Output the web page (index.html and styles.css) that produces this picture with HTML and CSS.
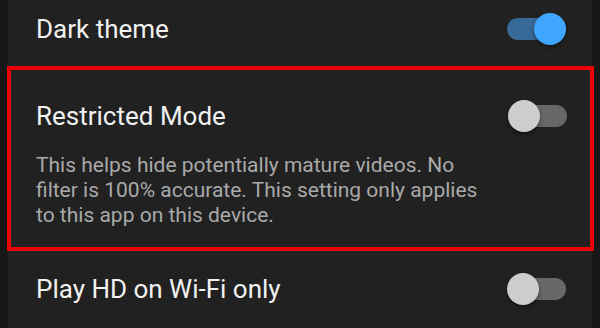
FILE: index.html
```html
<!DOCTYPE html>
<html lang="en">
<head>
<meta charset="utf-8">
<title>Settings</title>
<link rel="stylesheet" href="styles.css">
</head>
<body>
<main class="panel">
  <div class="row row-first">
    <span class="title">Dark theme</span>
    <span class="switch on" role="switch" aria-checked="true"><span class="knob"></span></span>
  </div>
  <section class="highlight">
    <div class="row-inner">
      <span class="title">Restricted Mode</span>
      <span class="switch" role="switch" aria-checked="false"><span class="knob"></span></span>
    </div>
    <p class="desc">This helps hide potentially mature videos. No<br>filter is 100% accurate. This setting only applies<br>to this app on this device.</p>
  </section>
  <div class="row row-last">
    <span class="title">Play HD on Wi-Fi only</span>
    <span class="switch" role="switch" aria-checked="false"><span class="knob"></span></span>
  </div>
</main>
</body>
</html>
```
FILE: styles.css
```css
html, body {
  margin: 0;
  padding: 0;
  height: 100%;
  overflow: hidden;
}
body {
  background: #171717;
  font-family: Roboto, "Noto Sans", "Liberation Sans", sans-serif;
}
.panel {
  margin: 0 8px;
  height: 328px;
  background: #212121;
  display: flex;
  flex-direction: column;
}
.row {
  display: flex;
  align-items: center;
  justify-content: space-between;
  padding: 0 26px 0 28px;
}
.row-first {
  height: 60px;
  margin-bottom: 8px;
}
.row-last {
  height: 80px;
}
.title {
  color: #f1f1f1;
  font-size: 26px;
  line-height: 30px;
}
.highlight {
  margin: 0 -2px 0 -1px;
  border: 4px solid #ec0008;
  padding: 30px 23px 19px 25px;
}
.row-inner {
  display: flex;
  align-items: center;
  justify-content: space-between;
}
.desc {
  margin: 21px 0 0;
  color: #a9a9a9;
  font-size: 21px;
  line-height: 25px;
  white-space: nowrap;
}
.switch {
  position: relative;
  display: block;
  width: 59px;
  height: 32px;
  flex: none;
}
.switch::before {
  content: "";
  position: absolute;
  left: 0;
  right: 0;
  top: 5px;
  height: 22px;
  border-radius: 11px;
  background: #686868;
}
.switch .knob {
  position: absolute;
  top: 0;
  left: 0;
  width: 32px;
  height: 32px;
  border-radius: 50%;
  background: #cdcdcd;
  box-shadow: 0 2px 4px rgba(0, 0, 0, 0.45);
}
.switch.on::before {
  background: #386a97;
}
.switch.on .knob {
  left: auto;
  right: 0;
  background: #3ea6ff;
}
```
